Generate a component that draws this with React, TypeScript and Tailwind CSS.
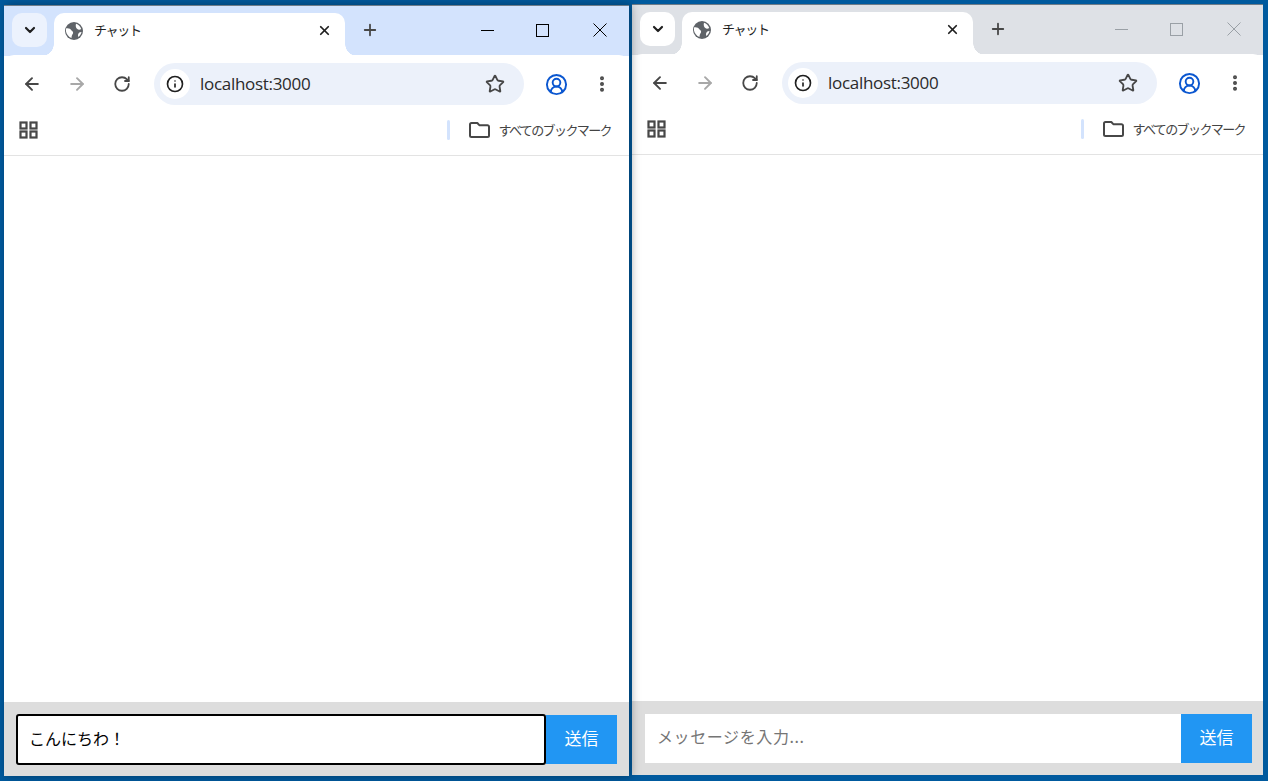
import { useState } from 'react';
import { ArrowLeft, ArrowRight, ChevronDown, Info, Plus, RotateCw, Star, X, CircleUserRound, EllipsisVertical } from 'lucide-react';

const jp = "font-['Noto_Sans_CJK_JP','Noto_Sans',sans-serif]";

const Globe = () => (
  <svg width="18" height="18" viewBox="0 0 18 18" className="flex-none">
    <circle cx="9" cy="9" r="9" fill="#5f6368" />
    <path d="M1 6.5c2.5-.6 4.5.4 5.5 2 1 .5 2 1.5 1.5 3-.6 1.200-1.500 2-1.500 4.500C3.500 15 1.500 12 1 9.500z" fill="#fff" />
    <path d="M11 1.800c2.500.7 4.500 2.700 5.200 5.200-1.500 1-3 .8-4.200-.2-1-.9-1.700-2.800-1-5z" fill="#fff" />
    <path d="M16.500 10c-.4 2-1.500 3.800-3.200 5-.6-1.500-.3-3.500 1-4.500.6-.4 1.400-.6 2.200-.5z" fill="#fff" />
  </svg>
);

const GridIcon = () => (
  <svg width="19" height="18" viewBox="0 0 19 18" fill="none" stroke="#474747" strokeWidth="2.200">
    <rect x="1.500" y="1.500" width="6" height="6" />
    <rect x="11.500" y="1.500" width="6" height="6" />
    <rect x="1.500" y="10.500" width="6" height="6" />
    <rect x="11.500" y="10.500" width="6" height="6" />
  </svg>
);

const FolderIcon = () => (
  <svg width="21" height="16" viewBox="0 0 21 16" fill="none" stroke="#474747" strokeWidth="2" className="flex-none">
    <path d="M2.500 1h5.800l2 2.200h8.200a1.500 1.500 0 0 1 1.500 1.500v8.800a1.500 1.500 0 0 1-1.500 1.500h-16A1.500 1.500 0 0 1 1 13.500v-11A1.500 1.500 0 0 1 2.500 1z" strokeLinejoin="round" />
  </svg>
);

const ChatInput = ({ value, focused }: { value: string; focused: boolean }) => {
  const [text, setText] = useState(value);
  return (
    <input
      value={text}
      onChange={(e) => setText(e.target.value)}
      placeholder="メッセージを入力..."
      className={`flex-1 min-w-0 text-[16px] bg-white text-black outline-none placeholder:text-[#757575] placeholder:tracking-[0.6px] ${jp} ${
        focused ? 'border-2 border-black rounded-[3px] pl-[11px] pr-[12px] pb-[3px]' : 'px-[12px] pb-[5px]'
      }`}
    />
  );
};

const BrowserWindow = ({ active, value, className }: { active: boolean; value: string; className: string }) => {
  const stroke = active ? '#000000' : '#9aa0a6';
  return (
    <div className={`flex flex-col bg-white border-t border-[#6f7c88] ${className}`}>
      {/* Tab strip */}
      <div className={`h-[50px] flex-none flex items-start ${active ? 'bg-[#d3e3fd]' : 'bg-[#dee1e6]'}`}>
        <button className={`mt-[7px] ml-[8px] w-[35px] h-[34px] rounded-[10px] flex items-center justify-center ${active ? 'bg-[#ecf2fd]' : 'bg-white'}`}>
          <ChevronDown size={16} strokeWidth={3.200} className="text-[#1f1f1f]" />
        </button>
        <div className="relative mt-[7px] ml-[7px] w-[291px] h-[43px] bg-white rounded-t-[10px] flex items-center pl-[11px] pr-[13px] pb-[8px]">
          <div className="absolute bottom-0 -left-[12px] w-[12px] h-[12px] bg-[radial-gradient(circle_at_0_0,transparent_11.500px,white_12px)]" />
          <div className="absolute bottom-0 -right-[12px] w-[12px] h-[12px] bg-[radial-gradient(circle_at_100%_0,transparent_11.500px,white_12px)]" />
          <Globe />
          <span className={`ml-[11px] -mt-[2px] text-[13px] tracking-[-1.300px] text-[#1f1f1f] ${jp}`}>チャット</span>
          <X size={15} strokeWidth={2.800} className="ml-auto text-[#1f1f1f]" />
        </div>
        <Plus size={18} strokeWidth={2.400} className="ml-[16px] mt-[15px] text-[#474747] flex-none" />
        <div className="ml-auto flex items-center h-[32px] mt-[8px]">
          <div className="w-[52px] flex justify-center">
            <svg width="13" height="13" viewBox="0 0 13 13"><path d="M0 6.500h13" stroke={stroke} /></svg>
          </div>
          <div className="w-[58px] flex justify-center">
            <svg width="13" height="13" viewBox="0 0 13 13" fill="none"><rect x="0.500" y="0.500" width="12" height="12" stroke={stroke} /></svg>
          </div>
          <div className="w-[58px] flex justify-center">
            <svg width="14" height="14" viewBox="0 0 14 14"><path d="M.5.500l13 13M13.500.500l-13 13" stroke={stroke} /></svg>
          </div>
        </div>
      </div>

      {/* Toolbar */}
      <div className={`h-[55px] flex-none flex items-center bg-white -mt-px rounded-t-[10px] relative pt-[3px] pl-[18px] text-[#474747] ${active ? 'pr-[17px]' : 'pr-[18px]'}`}>
        <ArrowLeft size={20} strokeWidth={2.300} />
        <ArrowRight size={20} strokeWidth={2.300} className="ml-[25px] text-[#a8a8a8]" />
        <RotateCw size={18} strokeWidth={2.400} className="ml-[26px]" />
        <div className="ml-[23px] flex-1 h-[42px] rounded-full bg-[#ecf1fa] flex items-center pl-[6px] pr-[19px]">
          <div className="w-[30px] h-[30px] rounded-full bg-white flex items-center justify-center">
            <Info size={18} strokeWidth={2.200} className="text-[#1f1f1f]" />
          </div>
          <span className="ml-[10px] text-[17px] text-[#2a2a2a] font-['Open_Sans',sans-serif] tracking-[-0.3px]">localhost:3000</span>
          <Star size={20} strokeWidth={2.200} className="ml-auto" />
        </div>
        <CircleUserRound size={23} strokeWidth={2} className="ml-[21px] text-[#0b57d0]" />
        <EllipsisVertical size={20} strokeWidth={2.800} className="ml-[24px]" />
      </div>

      {/* Bookmark bar */}
      <div className="h-[46px] flex-none flex items-center bg-white border-b border-[#e3e3e3] pb-[5px] pl-[15px] pr-[18px] text-[#474747]">
        <GridIcon />
        <div className="ml-auto w-[3px] h-[20px] bg-[#d3e3fd] rounded-full" />
        <div className="ml-[19px]"><FolderIcon /></div>
        <span className={`ml-[8px] text-[13px] tracking-[-1.600px] text-[#444] ${jp}`}>すべてのブックマーク</span>
      </div>

      <div className="flex-1 bg-white" />

      {/* Chat form */}
      <div className={`h-[74px] flex-none bg-[#dddddd] flex ${active ? 'pl-[12px] pr-[12px] pt-[12px] pb-[11px]' : 'pl-[13px] pr-[11px] pt-[13px] pb-[12px]'}`}>
        <ChatInput value={value} focused={active} />
        <button className={`w-[71px] bg-[#2196f3] text-white text-[17px] pb-[3px] ${active ? 'my-px' : ''} ${jp}`}>送信</button>
      </div>
    </div>
  );
};

export default function App() {
  return (
    <div className="w-[1268px] h-[781px] bg-[#005a9e] overflow-hidden flex items-start pl-[4px]">
      <BrowserWindow active value="こんにちわ！" className="w-[625px] h-[771px] mt-[5px] relative z-10 shadow-[2px_0_9px_rgba(0,0,0,0.35)]" />
      <BrowserWindow active={false} value="" className="w-[631px] h-[771px] mt-[4px] ml-[3px]" />
    </div>
  );
}
